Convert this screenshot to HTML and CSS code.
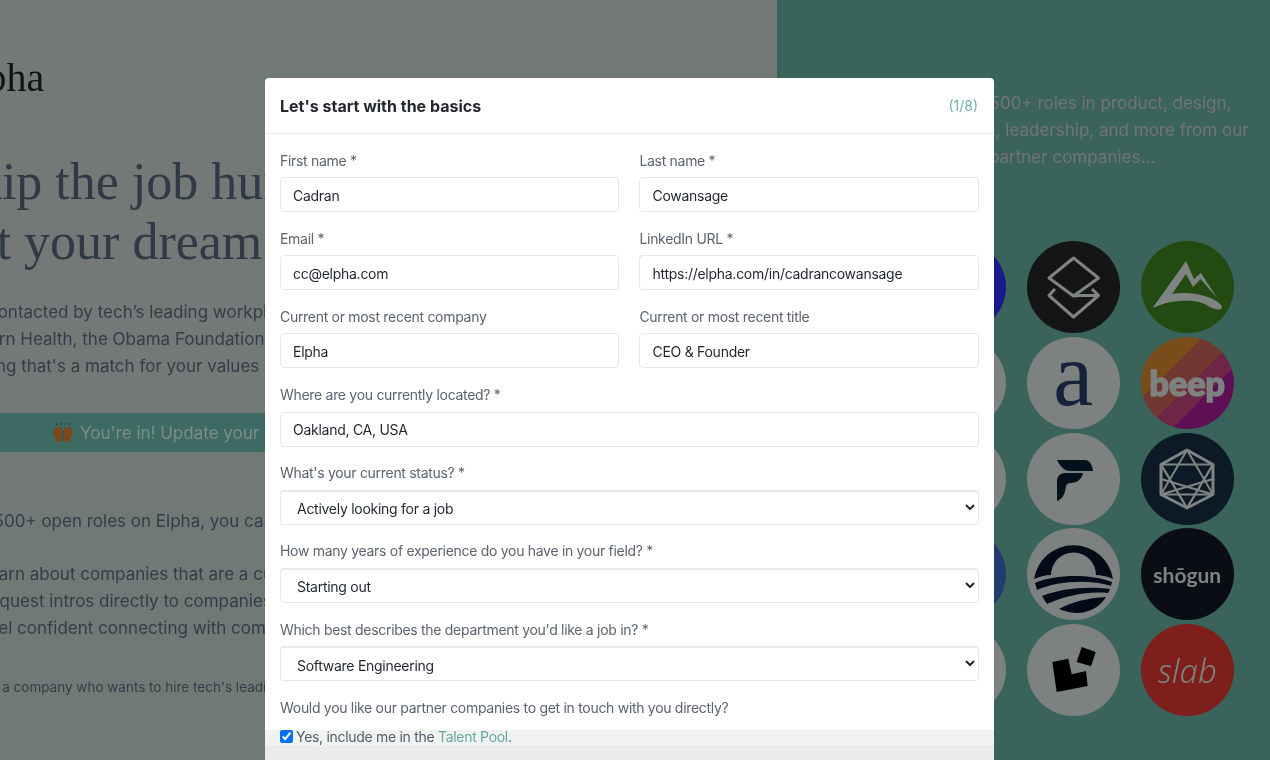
FILE: index.html
```html
<!DOCTYPE html>
<html lang="en">
<head>
<meta charset="utf-8">
<title>Elpha</title>
<link rel="stylesheet" href="styles.css">
</head>
<body>
<div class="page">
  <section class="left">
    <div class="tint-lower"></div>
    <div class="tint-edge"></div>
    <div class="logo">Elpha</div>
    <h1 class="headline">
      <span class="hl hl-a">Skip the job hunt.</span>
      <span class="hl hl-b">Get your dream job.</span>
    </h1>
    <p class="intro">
      <span class="intro-line intro-first">Get contacted by tech’s leading workplaces</span>
      <span class="intro-line">Modern Health, the Obama Foundation, and more</span>
      <span class="intro-line intro-third">anything that's a match for your values and goals.</span>
    </p>
    <div class="banner">
      <svg class="hands" viewBox="0 0 20 20" width="20" height="20" aria-hidden="true">
        <path d="M0 9.500C0 7 1.500 5.500 3 4.500L6 4 9 5.500V13L8.500 19H3L2.500 14C1 13 0 11.500 0 9.500z" fill="#7b471b"/>
        <path d="M20 9.500C20 7 18.500 5.500 17 4.500L14 4 11 5.500V13L11.500 19H17L17.500 14C19 13 20 11.500 20 9.500z" fill="#7b471b"/>
        <path d="M9.500 7.500h1v10h-1z" fill="#38403c"/>
        <path d="M3.500 0.500v1.500M8 0v1.500M12 0v1.500M16.500 0.500v1.500" stroke="#2a2f2a" stroke-width="1"/>
      </svg>
      <span>You're in! Update your profile</span>
    </div>
    <div class="details">
      <p class="detail-lead">1,500+ open roles on Elpha, you can find your match.</p>
      <p class="detail-line">Learn about companies that are a culture fit</p>
      <p class="detail-line">Request intros directly to companies hiring</p>
      <p class="detail-line">Feel confident connecting with companies</p>
      <p class="detail-small">Or a company who wants to hire tech's leading women?</p>
    </div>
  </section>

  <section class="right">
    <p class="pitch">
      <span class="pitch-line">Explore 1,500+ roles in product, design,</span>
      <span class="pitch-line pitch-second">engineering, leadership, and more from our</span>
      <span class="pitch-line pitch-third">300+ partner companies...</span>
    </p>
    <div class="logos">
      <div class="co co-blue"></div>
      <div class="co co-black">
        <svg viewBox="0 0 92 92" class="co-svg" aria-hidden="true"><g fill="none" stroke="#7e8482" stroke-width="3" stroke-linejoin="round"><path d="M46.500 17 71.500 37 46.500 55 22 37z"/><path d="M28 48 22 54.500 46.500 76 71.500 54.500 65 48"/><path d="M46.500 55 53 54.500H71.500"/></g></svg>
      </div>
      <div class="co co-green">
        <svg viewBox="0 0 92 92" class="co-svg" aria-hidden="true"><path fill="#7e8482" d="M45 20 11.500 67C26 60 44 58 58 61 66 63 70 68.500 78 68.500 83 68.500 81 63.500 76 60.500 62 52 44 51 31 53L45 33 52 46 59.500 38 76 57 60 32 53 38z"/></svg>
      </div>

      <div class="co co-grey"></div>
      <div class="co co-grey"><span class="mark-a">a</span></div>
      <div class="co co-beep"><span class="mark-beep">beep</span></div>

      <div class="co co-grey"></div>
      <div class="co co-grey">
        <svg viewBox="0 0 92 92" class="co-svg" aria-hidden="true"><path fill="#04111c" d="M30 27H58C63 27 65 32 66 38H43C37 38 33 33 30 27z"/><path fill="#04111c" d="M30 68V48C30 43 34 40 38 40H56C55 46 50 50 44 50 40 50 39 52 38.500 56 37.500 62 35 66 30 68z"/></svg>
      </div>
      <div class="co co-navy">
        <svg viewBox="0 0 92 92" class="co-svg" aria-hidden="true"><g fill="none" stroke="#7e8482" stroke-width="2" stroke-linejoin="round"><path stroke-width="3" d="M46 17 72 31.500V61.500L46 75 20 61.500V31.500z"/><path d="M46 17 72 61.500H20z"/><path d="M46 75 72 31.500H20z"/><path d="M20 31.500 46 75M72 31.500 46 75"/><path d="M20 46 72 61.500M72 46 20 61.500"/></g></svg>
      </div>

      <div class="co co-indigo"></div>
      <div class="co co-grey">
        <svg viewBox="0 0 92 92" class="co-svg" aria-hidden="true"><g fill="#030b18"><path d="M7 51A40 40 0 0 1 86 51C79 48 74 47 69 47A22.500 22.500 0 0 0 24 47C18 47 12 49 7 51z"/><path d="M8 55C30 46 62 46 85 54L84 58C62 51 30 53 10 62z"/><path d="M15 68C35 60 60 58 83 61L81 65C60 63 38 68 20 76z"/><path d="M32 81C45 74 60 70 79 69 75 76 67 82 58 84 50 86 42 85 32 81z"/></g></svg>
      </div>
      <div class="co co-ink"><span class="mark-shogun">shōgun</span></div>

      <div class="co co-grey"></div>
      <div class="co co-grey">
        <svg viewBox="0 0 92 92" class="co-svg" aria-hidden="true"><g fill="#000"><path d="M25.300 38 41.300 34.700 44.700 50.300 59 47 60.700 62 29.700 68z"/><path d="M54.700 23 68.700 28 64 42.300 49.700 38z"/></g></svg>
      </div>
      <div class="co co-red"><span class="mark-slab">slab</span></div>
    </div>
  </section>

  <form class="modal">
    <header class="modal-head">
      <h2 class="modal-title">Let's start with the basics</h2>
      <span class="modal-step">(1/8)</span>
    </header>
    <div class="modal-body">
      <div class="field">
        <label class="field-label" for="f1">First name *</label>
        <input class="control" id="f1" type="text" value="Cadran">
      </div>
      <div class="field">
        <label class="field-label" for="f2">Last name *</label>
        <input class="control" id="f2" type="text" value="Cowansage">
      </div>
      <div class="field">
        <label class="field-label" for="f3">Email *</label>
        <input class="control" id="f3" type="text" value="cc@elpha.com">
      </div>
      <div class="field">
        <label class="field-label" for="f4">LinkedIn URL *</label>
        <input class="control" id="f4" type="text" value="https://elpha.com/in/cadrancowansage">
      </div>
      <div class="field">
        <label class="field-label" for="f5">Current or most recent company</label>
        <input class="control" id="f5" type="text" value="Elpha">
      </div>
      <div class="field">
        <label class="field-label" for="f6">Current or most recent title</label>
        <input class="control" id="f6" type="text" value="CEO &amp; Founder">
      </div>
      <div class="field field-wide">
        <label class="field-label" for="f7">Where are you currently located? *</label>
        <input class="control" id="f7" type="text" value="Oakland, CA, USA">
      </div>
      <div class="field field-wide">
        <label class="field-label" for="f8">What's your current status? *</label>
        <select class="control control-select" id="f8"><option>Actively looking for a job</option></select>
      </div>
      <div class="field field-wide">
        <label class="field-label" for="f9">How many years of experience do you have in your field? *</label>
        <select class="control control-select" id="f9"><option>Starting out</option></select>
      </div>
      <div class="field field-wide">
        <label class="field-label" for="f10">Which best describes the department you'd like a job in? *</label>
        <select class="control control-select" id="f10"><option>Software Engineering</option></select>
      </div>
      <div class="field field-wide">
        <div class="field-label">Would you like our partner companies to get in touch with you directly?</div>
        <label class="check-row"><input class="check" type="checkbox" checked>Yes, include me in the <a class="link" href="#">Talent Pool</a>.</label>
      </div>
    </div>
  </form>
</div>
</body>
</html>
```

FILE: styles.css
```css
* { box-sizing: border-box; }

html, body {
  margin: 0;
  height: 100%;
}

body {
  font-family: Inter, "Liberation Sans", sans-serif;
  overflow: hidden;
  background: #3a635c;
}

.page {
  position: relative;
  display: flex;
  width: 1270px;
  height: 760px;
  overflow: hidden;
}

/* Left, dimmed background panel */
.left {
  position: relative;
  width: 777px;
  flex: none;
  overflow: hidden;
  background: #747977;
  white-space: nowrap;
  color: #333d47;
}

.tint-lower {
  position: absolute;
  left: 0;
  right: 0;
  top: 507px;
  bottom: 0;
  background: #6f7a77;
}

.tint-edge {
  position: absolute;
  left: 257px;
  right: 0;
  top: 70px;
  bottom: 0;
  border-radius: 8px 0 0 0;
  background: #6f7a77;
}

.logo {
  position: relative;
  margin: 52px 0 0 -49px;
  font: 40px/52px "Liberation Serif", serif;
  color: #111416;
}

.headline {
  position: relative;
  margin: 48px 0 0;
  font: 400 52px/60px "Liberation Serif", serif;
  color: #2f3a46;
}

.hl { display: block; }
.hl-a { margin-left: -53px; }
.hl-b { margin-left: -64px; }

.intro {
  position: relative;
  margin: 27px 0 0 -47px;
  font-size: 17px;
  line-height: 27px;
}

.intro-line { display: block; }
.intro-first { margin-left: 2px; }
.intro-third { margin-left: -6px; }

.banner {
  position: relative;
  display: flex;
  align-items: center;
  gap: 7px;
  height: 39px;
  margin-top: 33px;
  padding-left: 53px;
  background: #3d6b63;
  color: #7f8b88;
  font-size: 17px;
}

.details {
  position: relative;
  margin: 56px 0 0 -21px;
  font-size: 17px;
  line-height: 27px;
}

.details p { margin: 0; }
.details .detail-lead { margin: 0 0 26px 3px; }
.details .detail-small {
  margin: 32px 0 0 4px;
  font-size: 13.500px;
}

/* Right panel */
.right {
  flex: 1;
  min-width: 0;
  padding: 90px 0 0 136px;
  color: #737573;
}

.pitch {
  margin: 0;
  font-size: 17px;
  line-height: 27px;
  white-space: nowrap;
}

.pitch-line { display: block; }
.pitch-second { margin-left: -13px; }
.pitch-third { margin-left: 28px; }

.logos {
  display: grid;
  grid-template-columns: repeat(3, 92.500px);
  grid-auto-rows: 92px;
  column-gap: 21.500px;
  row-gap: 3.750px;
  margin-top: 70px;
}

.co {
  display: flex;
  align-items: center;
  justify-content: center;
  border-radius: 50%;
  overflow: hidden;
  background: #7d8280;
  color: #7e8482;
}

.co-svg { display: block; width: 92px; height: 92px; }

.co-blue { background: #1a1a8a; }
.co-black { background: #151515; }
.co-green { background: #234a10; }
.co-grey { background: #7d8280; }
.co-navy { background: #0c1a26; }
.co-indigo { background: #223c70; }
.co-ink { background: #0a0e14; }
.co-red { background: #7e1f1c; }
.co-beep {
  background: linear-gradient(135deg, #7a4c1a 0 33%, #703830 33% 52%, #6e2646 52% 66%, #5f1055 66% 100%);
}

.mark-a {
  font: 90px/60px "Liberation Serif", serif;
  color: #14233a;
  margin-top: -16px;
}

.mark-beep {
  font: 900 34px/1 Lato, sans-serif;
  color: #7d8280;
  -webkit-text-stroke: 1.500px #7d8280;
}

.mark-shogun {
  font: 700 21px/1 Lato, sans-serif;
  color: #7e8482;
}

.mark-slab {
  font: italic 300 33px/1 "Noto Sans", sans-serif;
  color: #7d8280;
}

/* Modal over the panels */
.modal {
  position: absolute;
  left: 265px;
  top: 78px;
  bottom: 0;
  width: 729px;
  overflow: hidden;
  border-radius: 4px 4px 0 0;
  background: #fff;
}

.modal::after {
  content: "";
  position: absolute;
  left: 0;
  right: 0;
  bottom: 0;
  height: 30px;
  background: linear-gradient(#f1f3f3 0 15px, #ebebeb 15px);
  mix-blend-mode: multiply;
  pointer-events: none;
}

.modal-head {
  display: flex;
  align-items: center;
  justify-content: space-between;
  height: 56px;
  padding: 0 16px 0 15px;
  border-bottom: 1px solid #e9eaea;
}

.modal-title {
  margin: 0;
  font-size: 16px;
  font-weight: 700;
  color: #24292f;
}

.modal-step {
  font-size: 14px;
  color: #6fb0aa;
}

.modal-body {
  display: grid;
  grid-template-columns: 339.450px 1fr;
  column-gap: 20px;
  padding: 15.500px 15px 0;
}

.field {
  margin-bottom: 15.700px;
  min-width: 0;
}

.field-wide { grid-column: 1 / -1; }

.field-label {
  display: block;
  margin-bottom: 6.500px;
  font-size: 14px;
  line-height: 21px;
  letter-spacing: -0.300px;
  color: #5b6470;
}

.control {
  display: block;
  width: 100%;
  height: 35px;
  padding: 1px 12px 0;
  border: 1px solid #e8e8e9;
  border-radius: 4px;
  background: #fff;
  font: 14px Inter, "Liberation Sans", sans-serif;
  letter-spacing: -0.270px;
  color: #1f2730;
  outline: none;
}

.control-select {
  padding-top: 2px;
  border-top-width: 2px;
}

.check-row {
  display: flex;
  align-items: center;
  margin-top: 8.500px;
  font-size: 14px;
  line-height: 21px;
  letter-spacing: -0.300px;
  color: #5b6470;
  white-space: pre;
}

.check {
  width: 13px;
  height: 13px;
  margin: 0 3px 0 0;
  flex: none;
}

.link {
  color: #6fb0aa;
  text-decoration: none;
}
```
